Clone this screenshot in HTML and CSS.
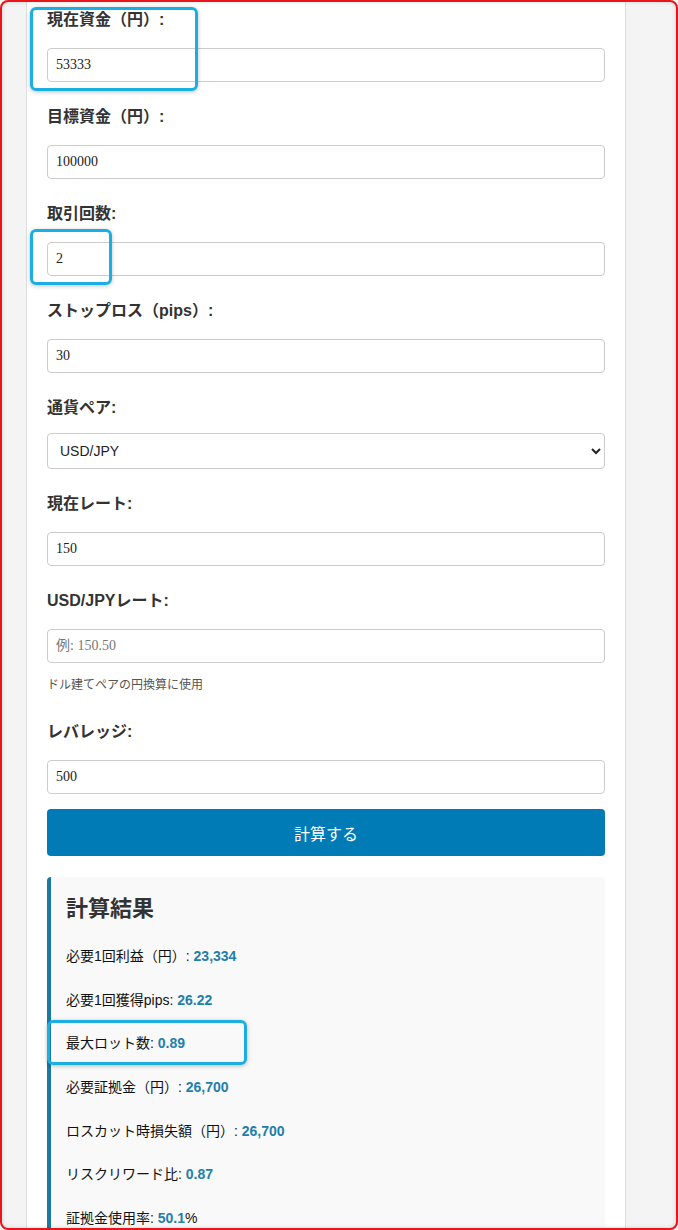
FILE: index.html
```html
<!DOCTYPE html>
<html lang="ja">
<head>
  <meta charset="UTF-8">
  <meta name="viewport" content="width=device-width, initial-scale=1.0">
  <title>FXロット計算</title>
  <link rel="stylesheet" href="styles.css">
</head>
<body>
  <div class="container">
    <form id="lot-form">
      <div class="field">
        <label for="current">現在資金（円）:</label>
        <input type="number" id="current" value="53333">
      </div>
      <div class="field">
        <label for="target">目標資金（円）:</label>
        <input type="number" id="target" value="100000">
      </div>
      <div class="field">
        <label for="trades">取引回数:</label>
        <input type="number" id="trades" value="2">
      </div>
      <div class="field">
        <label for="stoploss">ストップロス（pips）:</label>
        <input type="number" id="stoploss" value="30">
      </div>
      <div class="field">
        <label for="pair">通貨ペア:</label>
        <select id="pair">
          <option>USD/JPY</option>
          <option>EUR/JPY</option>
          <option>EUR/USD</option>
        </select>
      </div>
      <div class="field">
        <label for="rate">現在レート:</label>
        <input type="number" id="rate" value="150">
      </div>
      <div class="field">
        <label for="usdjpy">USD/JPYレート:</label>
        <input type="number" id="usdjpy" placeholder="例: 150.50">
        <small class="help">ドル建てペアの円換算に使用</small>
      </div>
      <div class="field">
        <label for="leverage">レバレッジ:</label>
        <input type="number" id="leverage" value="500">
      </div>
      <button type="submit" class="calc-btn">計算する</button>
    </form>

    <!-- 計算結果 -->
    <div class="result">
      <h2>計算結果</h2>
      <p>必要1回利益（円）: <strong>23,334</strong></p>
      <p>必要1回獲得pips: <strong>26.22</strong></p>
      <p>最大ロット数: <strong>0.89</strong></p>
      <p>必要証拠金（円）: <strong>26,700</strong></p>
      <p>ロスカット時損失額（円）: <strong>26,700</strong></p>
      <p>リスクリワード比: <strong>0.87</strong></p>
      <p>証拠金使用率: <strong>50.1</strong>%</p>
    </div>
  </div>

  <!-- 注釈 -->
  <div class="frame"></div>
  <div class="mark mark-1"></div>
  <div class="mark mark-2"></div>
  <div class="mark mark-3"></div>
</body>
</html>
```

FILE: styles.css
```css
/* 全体 */
html, body {
  height: 1230px;
  overflow: hidden;
}
body {
  font-family: 'Liberation Sans', Arial, 'Noto Sans CJK JP', sans-serif;
  background: #f4f4f4;
  margin: 0;
  color: #333;
}
.container {
  width: 558px;
  min-height: 1230px;
  margin-left: 26px;
  padding: 6px 20px 0;
  background: #fff;
  border-left: 1px solid #ddd;
  border-right: 1px solid #ddd;
}
/* フォーム */
.field {
  margin-bottom: 21px;
}
.field label {
  display: block;
  font-size: 16px;
  font-weight: bold;
  line-height: 24px;
  padding-top: 2px;
  margin-bottom: 16px;
}
.field input,
.field select {
  display: block;
  width: 100%;
  height: 34px;
  box-sizing: border-box;
  padding: 0 8px;
  border: 1px solid #ccc;
  border-radius: 4px;
  background: #fff;
  font-family: 'Liberation Serif', 'Noto Sans CJK JP', serif;
  font-size: 14px;
  color: #222;
}
.field input::placeholder {
  color: #777;
}
.field select {
  height: 36px;
  padding: 0 6px 0 8px;
  font-family: 'Liberation Sans', Arial, sans-serif;
  margin-top: -3px;
}
.help {
  display: block;
  font-size: 12px;
  color: #555;
  margin-top: 12px;
  margin-bottom: 23px;
  line-height: 20px;
}
.calc-btn {
  display: block;
  width: 100%;
  height: 47px;
  margin-top: -6px;
  border: none;
  border-radius: 4px;
  background: #007bb6;
  color: #fff;
  font-family: 'Liberation Sans', Arial, 'Noto Sans CJK JP', sans-serif;
  font-size: 16px;
  cursor: pointer;
}
/* 結果 */
.result {
  margin-top: 21px;
  background: #f9f9f9;
  border-left: 4px solid #1a7aa3;
  border-radius: 4px;
  padding: 14px 15px 20px;
}
.result h2 {
  margin: 0 0 14px;
  font-family: 'Noto Sans CJK JP', sans-serif;
  font-size: 22px;
  line-height: 30px;
  font-weight: bold;
  color: #333;
}
.result p {
  margin: 0;
  padding: 12px 0;
  font-size: 14px;
  line-height: 19.67px;
  color: #111;
}
.result strong {
  color: #1f7fab;
}
/* 注釈の枠 */
.frame {
  position: absolute;
  left: 0;
  top: 0;
  width: 678px;
  height: 1230px;
  box-sizing: border-box;
  border: 2px solid #e8151b;
  border-radius: 8px;
  box-shadow: inset 0 0 4px rgba(0,0,0,0.15);
  pointer-events: none;
}
.mark {
  position: absolute;
  box-sizing: border-box;
  border: 3px solid #1aaee3;
  border-radius: 6px;
  box-shadow: 0 1px 4px rgba(0,0,0,0.25);
  pointer-events: none;
}
.mark-1 { left: 30px; top: 7px; width: 168px; height: 84px; }
.mark-2 { left: 30px; top: 229px; width: 82px; height: 56px; }
.mark-3 { left: 47px; top: 1020px; width: 200px; height: 45px; }
```
